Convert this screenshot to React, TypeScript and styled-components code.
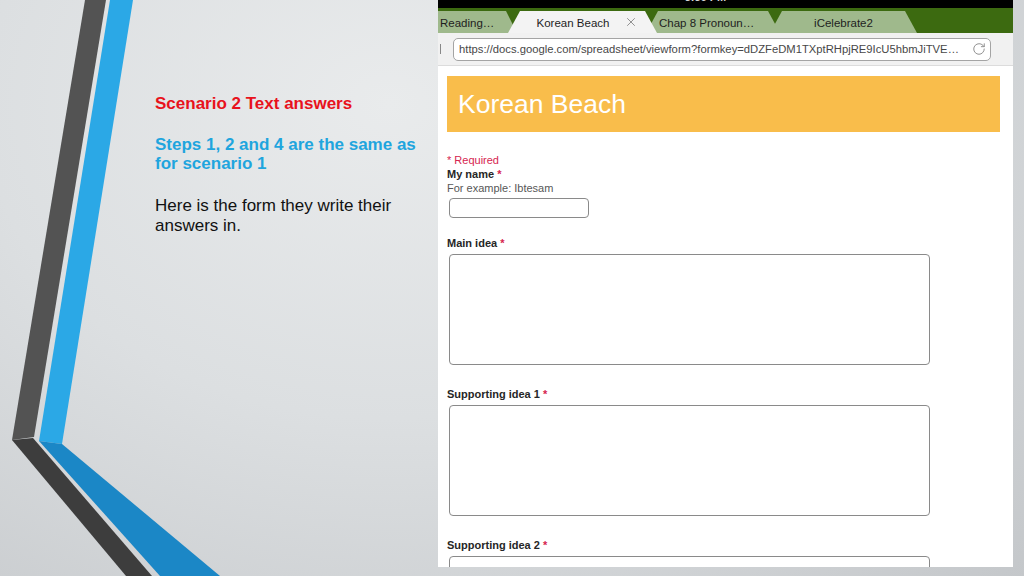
import React from 'react';
import styled, { createGlobalStyle } from 'styled-components';
import { X, RotateCw } from 'lucide-react';

const GlobalStyle = createGlobalStyle`
  html, body {
    margin: 0;
    padding: 0;
    width: 1024px;
    height: 576px;
    overflow: hidden;
  }
  * {
    box-sizing: border-box;
  }
`;

const Slide = styled.div`
  display: flex;
  width: 1024px;
  height: 576px;
  background: radial-gradient(ellipse 900px 700px at 38% 18%, #e9ebec 0%, #dcdfe1 45%, #c3c6c9 100%);
  font-family: 'Liberation Sans', Arial, sans-serif;
`;

const LeftPane = styled.div`
  position: relative;
  flex: 0 0 438px;
  height: 576px;
`;

const Decoration = styled.svg`
  position: absolute;
  top: 0;
  left: 0;
`;

const TextBlock = styled.div`
  position: relative;
  display: flex;
  flex-direction: column;
  padding: 94px 0 0 155px;
`;

const Para = styled.p<{ $color: string; $bold?: boolean; $gap: number }>`
  margin: ${p => p.$gap}px 0 0 0;
  font-size: 17px;
  line-height: ${p => (p.$bold ? 19 : 20)}px;
  font-weight: ${p => (p.$bold ? 700 : 400)};
  color: ${p => p.$color};
`;

const Shot = styled.div`
  flex: 0 0 575px;
  height: 567px;
  display: flex;
  flex-direction: column;
  background: #ffffff;
  overflow: hidden;
`;

const StatusBar = styled.div`
  flex: 0 0 8px;
  background: #000;
  overflow: hidden;
  display: flex;
  justify-content: center;
  padding-right: 40px;
`;

const StatusText = styled.span`
  color: #d8d8d8;
  font-size: 11px;
  line-height: 11px;
  margin-top: -8px;
  font-weight: 700;
`;

const TabBar = styled.div`
  flex: 0 0 25px;
  background: #3c6a10;
  display: flex;
  align-items: flex-end;
`;

const Tab = styled.div<{ $w: number; $shift: number; $active?: boolean; $first?: boolean; $center?: boolean }>`
  position: relative;
  z-index: ${p => (p.$active ? 2 : 1)};
  width: ${p => p.$w}px;
  height: 22px;
  margin-left: ${p => p.$shift}px;
  background: ${p => (p.$active ? '#f3f3f3' : '#9fb98c')};
  clip-path: ${p =>
    p.$first
      ? 'polygon(0 0, calc(100% - 11px) 0, 100% 100%, 0 100%)'
      : 'polygon(12px 0, calc(100% - 12px) 0, 100% 100%, 0 100%)'};
  display: flex;
  align-items: center;
  justify-content: ${p => (p.$center ? 'center' : 'flex-start')};
  gap: 15px;
  padding: ${p => (p.$first ? '1px 0 0 2px' : p.$active ? '1px 0 0 10px' : p.$center ? '1px 0 0 0' : '1px 0 0 13px')};
  font-size: 11.5px;
  color: #1e1e1e;
  white-space: nowrap;
`;

const CloseIcon = styled(X)`
  color: #7a7a7a;
  margin-top: -1px;
`;

const Toolbar = styled.div`
  flex: 0 0 33px;
  background: #f1f1f1;
  display: flex;
  align-items: center;
  padding: 0 22px 0 2px;
  border-bottom: 1px solid #dcdcdc;
`;

const BackTick = styled.div`
  width: 1px;
  height: 10px;
  background: #888;
  margin-right: 12px;
`;

const UrlField = styled.div`
  flex: 1;
  min-width: 0;
  height: 23px;
  background: #fff;
  border: 1px solid #a4a4a4;
  border-radius: 5px;
  display: flex;
  align-items: center;
  gap: 8px;
  padding: 0 4px 0 5px;
  font-size: 11.25px;
  color: #474747;
  white-space: nowrap;
`;

const UrlText = styled.span`
  flex: 1;
  min-width: 0;
  overflow: hidden;
`;

const ReloadIcon = styled(RotateCw)`
  color: #8a8a8a;
  flex: 0 0 auto;
`;

const Page = styled.div`
  flex: 1 1 auto;
  min-height: 0;
  overflow: hidden;
  display: flex;
  flex-direction: column;
  padding: 10px 13px 0 9px;
`;

const FormHeader = styled.div`
  flex: 0 0 56px;
  background: #f9bd4b;
  display: flex;
  align-items: center;
  padding-left: 11px;
  font-size: 26.5px;
  color: #ffffff;
`;

const Required = styled.div`
  margin-top: 21px;
  font-size: 11px;
  line-height: 14px;
  color: #d6244f;
`;

const Label = styled.div<{ $gap: number }>`
  margin-top: ${p => p.$gap}px;
  font-size: 11px;
  line-height: 14px;
  font-weight: 700;
  color: #262626;
`;

const Star = styled.span`
  color: #d6244f;
`;

const Hint = styled.div`
  font-size: 11px;
  line-height: 14px;
  color: #575757;
`;

const TextInput = styled.div`
  flex: 0 0 20px;
  margin: 3px 0 0 2px;
  width: 140px;
  border: 1px solid #8a8a8a;
  border-radius: 4px;
  background: #fff;
`;

const TextArea = styled.div`
  flex: 0 0 111px;
  margin: 4px 0 0 2px;
  width: 481px;
  border: 1px solid #8a8a8a;
  border-radius: 4px;
  background: #fff;
`;

const tabs = [
  { label: 'Reading…', w: 79, shift: 0, first: true },
  { label: 'Korean Beach', w: 149, shift: -9, active: true },
  { label: 'Chap 8 Pronoun…', w: 134, shift: -11 },
  { label: 'iCelebrate2', w: 147, shift: -10, center: true },
];

const App: React.FC = () => {
  return (
    <>
      <GlobalStyle />
      <Slide>
        <LeftPane>
          <Decoration width="438" height="576" viewBox="0 0 438 576">
            <polygon points="85,0 106,0 34,437 12,440" fill="#535353" />
            <polygon points="12,440 33,438 152,576 126,576" fill="#3d3d3d" />
            <polygon points="110,0 133,0 62,444 39,441" fill="#2ba8e6" />
            <polygon points="39,441 62,444 220,576 160,576" fill="#1b87c6" />
          </Decoration>
          <TextBlock>
            <Para $color="#e8121c" $bold $gap={0}>Scenario 2 Text answers</Para>
            <Para $color="#1fa5de" $bold $gap={22}>
              Steps 1, 2 and 4 are the same as
              <br />
              for scenario 1
            </Para>
            <Para $color="#111111" $gap={23}>
              Here is the form they write their
              <br />
              answers in.
            </Para>
          </TextBlock>
        </LeftPane>
        <Shot>
          <StatusBar>
            <StatusText>3:56 PM</StatusText>
          </StatusBar>
          <TabBar>
            {tabs.map(t => (
              <Tab
                key={t.label}
                $w={t.w}
                $shift={t.shift}
                $active={t.active}
                $first={t.first}
                $center={t.center || t.active}
              >
                {t.label}
                {t.active && <CloseIcon size={14} strokeWidth={1.4} />}
              </Tab>
            ))}
          </TabBar>
          <Toolbar>
            <BackTick />
            <UrlField>
              <UrlText>https://docs.google.com/spreadsheet/viewform?formkey=dDZFeDM1TXptRHpjRE9IcU5hbmJiTVE…</UrlText>
              <ReloadIcon size={14} strokeWidth={1.6} />
            </UrlField>
          </Toolbar>
          <Page>
            <FormHeader>Korean Beach</FormHeader>
            <Required>* Required</Required>
            <Label $gap={0}>
              My name <Star>*</Star>
            </Label>
            <Hint>For example: Ibtesam</Hint>
            <TextInput />
            <Label $gap={18}>
              Main idea <Star>*</Star>
            </Label>
            <TextArea />
            <Label $gap={22}>
              Supporting idea 1 <Star>*</Star>
            </Label>
            <TextArea />
            <Label $gap={22}>
              Supporting idea 2 <Star>*</Star>
            </Label>
            <TextArea />
          </Page>
        </Shot>
      </Slide>
    </>
  );
};

export default App;
